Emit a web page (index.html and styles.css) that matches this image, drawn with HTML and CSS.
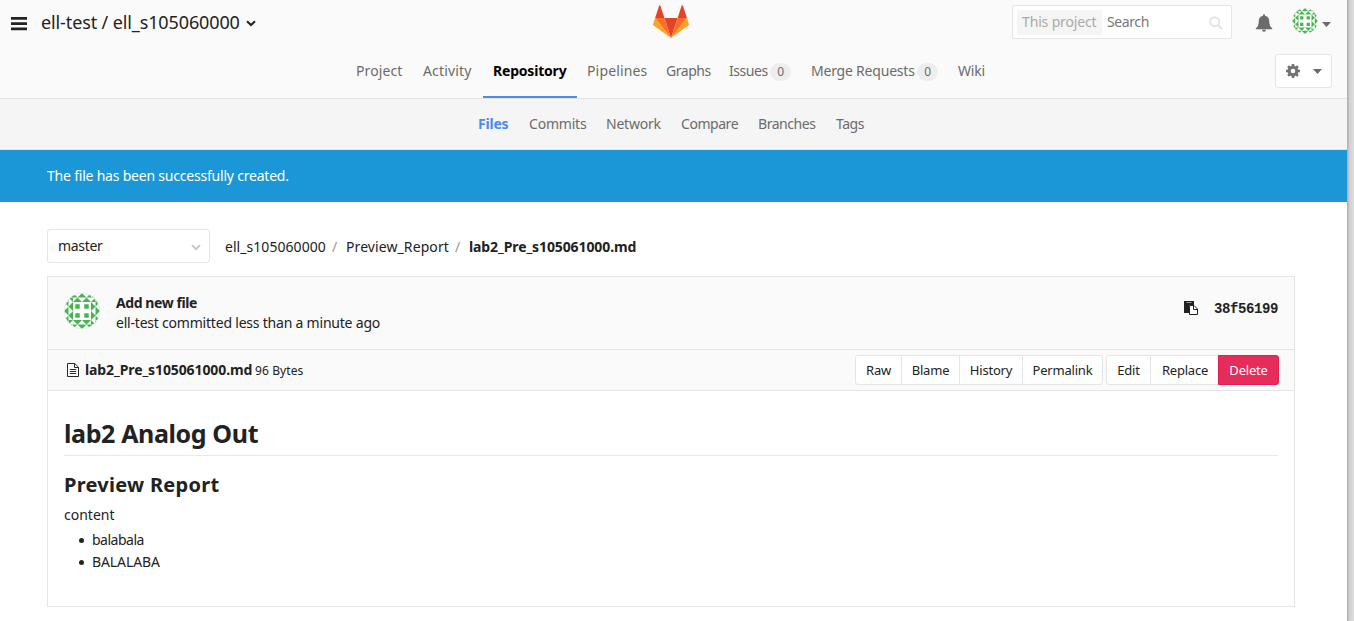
FILE: index.html
```html
<!DOCTYPE html>
<html lang="en">
<head>
<meta charset="utf-8">
<title>lab2_Pre_s105061000.md</title>
<link rel="stylesheet" href="styles.css">
</head>
<body>
<svg class="defs" width="0" height="0">
  <defs>
    <g id="side">
      <path d="M13.500 4.500L18 0L22.500 4.500zM9 0L13.500 4.500H9zM27 0L22.500 4.500H27zM9 9L13.500 4.500L18 9zM18 9L22.500 4.500L27 9z"/>
      <path d="M4.500 4.500H9V9zM0 4.500H4.500V9zM4.500 0H9V4.500z"/>
      <path d="M11.250 11.250h4.500v4.500h-4.500z"/>
    </g>
    <symbol id="identicon" viewBox="0 0 36 36">
      <clipPath id="round"><circle cx="18" cy="18" r="17.5"/></clipPath>
      <circle cx="18" cy="18" r="17.7" fill="#fff" stroke="#dedede" stroke-width=".6"/>
      <g clip-path="url(#round)" fill="#46b450">
        <use href="#side"/>
        <use href="#side" transform="rotate(90 18 18)"/>
        <use href="#side" transform="rotate(180 18 18)"/>
        <use href="#side" transform="rotate(270 18 18)"/>
      </g>
    </symbol>
  </defs>
</svg>
<div class="page">
  <header class="header">
    <div class="topbar">
      <div class="title-side">
        <svg class="burger" viewBox="0 0 16 14"><path d="M0 0h16v2.700H0zM0 5.300h16v2.700H0zM0 10.600h16v2.700H0z" fill="#222"/></svg>
        <h1 class="title">ell-test / ell_s105060000</h1>
        <svg class="title-caret" viewBox="0 0 10 7"><path d="M1 1.200L5 5L9 1.200" fill="none" stroke="#222" stroke-width="2"/></svg>
      </div>
      <svg class="logo" viewBox="0 0 36 33">
        <path d="M18 33L24.600 13H11.400z" fill="#e24329"/>
        <path d="M18 33L11.400 13H2.100z" fill="#fc6d26"/>
        <path d="M2.100 13L.1 19a1.400 1.400 0 0 0 .5 1.500L18 33z" fill="#fca326"/>
        <path d="M2.100 13h9.300L7.400.7a.7.7 0 0 0-1.300 0z" fill="#e24329"/>
        <path d="M18 33L24.600 13h9.300z" fill="#fc6d26"/>
        <path d="M33.900 13l2 6a1.400 1.400 0 0 1-.5 1.500L18 33z" fill="#fca326"/>
        <path d="M33.900 13h-9.300L28.600.7a.7.7 0 0 1 1.300 0z" fill="#e24329"/>
      </svg>
      <div class="tools">
        <div class="search">
          <span class="scope">This project</span>
          <span class="search-text">Search</span>
          <svg class="search-icon" viewBox="0 0 14 14"><circle cx="5.700" cy="5.700" r="4.500" fill="none" stroke="#e2e4e8" stroke-width="2"/><path d="M9 9l4 4" stroke="#e2e4e8" stroke-width="2.200"/></svg>
        </div>
        <svg class="bell" viewBox="0 0 18 18"><path d="M8 1.200a1 1 0 0 1 2 0v.6c3 .5 4.300 2.900 4.300 5.600 0 3.600 1 5.400 2.900 6.800v1.100H.8v-1.100c1.900-1.400 2.900-3.200 2.900-6.800C3.700 4.700 5 2.300 8 1.800zM7 15.700h4a2 2 0 0 1-4 0z" fill="#6b6b6b"/></svg>
        <svg class="avatar-small"><use href="#identicon"/></svg>
        <svg class="caret" viewBox="0 0 9 5"><path d="M0 0h9L4.500 5z" fill="#6b6b6b"/></svg>
      </div>
    </div>
    <div class="navrow">
      <nav class="nav">
        <a class="w47">Project</a>
        <a class="w50 loose">Activity</a>
        <a class="w74 active">Repository</a>
        <a class="w59 loose">Pipelines</a>
        <a class="w43 tight">Graphs</a>
        <a class="w62 tight">Issues <span class="badge">0</span></a>
        <a class="w127">Merge Requests <span class="badge">0</span></a>
        <a class="w28">Wiki</a>
      </nav>
      <div class="settings">
        <svg class="gear" viewBox="0 0 14 14"><g fill="#737373"><path fill-rule="evenodd" d="M7 1.700a5.300 5.300 0 1 0 0 10.600A5.300 5.300 0 0 0 7 1.700zM7 4.700a2.300 2.300 0 1 1 0 4.600a2.300 2.300 0 0 1 0-4.600z"/><path id="t" d="M5.500 2.500L5.800 0h2.400l.3 2.500zM5.500 11.500L5.800 14h2.400l.3-2.500z"/><use href="#t" transform="rotate(45 7 7)"/><use href="#t" transform="rotate(90 7 7)"/><use href="#t" transform="rotate(135 7 7)"/></g></svg>
        <svg class="caret" viewBox="0 0 9 5"><path d="M0 0h9L4.500 5z" fill="#6b6b6b"/></svg>
      </div>
    </div>
  </header>
  <nav class="subnav">
    <a class="w31 current">Files</a>
    <a class="w57">Commits</a>
    <a class="w55">Network</a>
    <a class="w57 tight">Compare</a>
    <a class="w58 tight">Branches</a>
    <a class="w28 tight">Tags</a>
  </nav>
  <div class="flash">The file has been successfully created.</div>
  <main class="content">
    <div class="ref-row">
      <div class="branch"><span>master</span><svg viewBox="0 0 10 7"><path d="M1 1.200L5 5.200L9 1.200" fill="none" stroke="#c4c4c4" stroke-width="1.900"/></svg></div>
      <div class="crumbs">
        <span class="c1">ell_s105060000</span><span class="slash">/</span><span class="c2">Preview_Report</span><span class="slash">/</span><strong class="c3">lab2_Pre_s105061000.md</strong>
      </div>
    </div>
    <section class="box">
      <div class="commit">
        <svg class="avatar"><use href="#identicon"/></svg>
        <div class="message"><strong>Add new file</strong><span>ell-test committed less than a minute ago</span></div>
        <svg class="copy" viewBox="0 0 14 14"><path d="M0 0h10v4H5v8H0z" fill="#222"/><path d="M2.500 1.500h5" stroke="#999"/><path d="M5.500 4.500h4.500l3.500 3.500v5.500h-8z" fill="#fff" stroke="#222"/><path d="M9.500 4.500v4h4" fill="none" stroke="#222"/></svg>
        <code class="sha">38f56199</code>
      </div>
      <div class="file-title">
        <svg class="doc" viewBox="0 0 12 14"><path d="M.5.5h7.300l3.700 3.700v9.300H.5zM7.500.5v4h4M2.800 6.500h6.400M2.800 8.500h6.400M2.800 10.500h6.400" fill="none" stroke="#292929"/></svg>
        <strong class="name">lab2_Pre_s105061000.md</strong>
        <span class="size">96 Bytes</span>
        <div class="group first"><a class="b47">Raw</a><a class="b59">Blame</a><a class="b64">History</a><a class="b81">Permalink</a></div>
        <div class="group"><a class="b45">Edit</a><a class="b69">Replace</a><a class="b61 delete">Delete</a></div>
      </div>
      <article class="doc-body">
        <h2>lab2 Analog Out</h2>
        <h3>Preview Report</h3>
        <p>content</p>
        <ul><li class="lower">balabala</li><li class="upper">BALALABA</li></ul>
      </article>
    </section>
  </main>
</div>
</body>
</html>
```
FILE: styles.css
```css
* { box-sizing: border-box; }
body {
  margin: 0;
  height: 621px;
  overflow: hidden;
  background: linear-gradient(90deg, #b2b2b2 0 1348px, #cecece 1349px, #dfdfdf 1354px);
  font: 14px/20px "Noto Sans", sans-serif;
  letter-spacing: -.21px;
  color: #222;
  white-space: nowrap;
}
.defs { position: absolute; }
svg { display: block; flex: none; }
h1, h2, h3, p, ul { margin: 0; padding: 0; }
.page { width: 1347px; height: 621px; background: #fff; }
.header { height: 99px; background: #fafafa; border-bottom: 1px solid #e4e4e4; }
.topbar { height: 48px; display: grid; grid-template-columns: 653px 36px 1fr; }
.title-side { display: flex; padding-left: 11px; }
.burger { width: 16px; height: 14px; margin-top: 17px; }
.title { width: 199px; margin: 10px 6px 0 14px; font-size: 18px; line-height: 24px; font-weight: 400; letter-spacing: -.12px; }
.title-caret { width: 10px; height: 7px; margin-top: 20px; }
.logo { width: 36px; height: 33px; margin-top: 5px; }
.tools { display: flex; padding-left: 323px; }
.search { width: 220px; height: 34px; margin-top: 5px; padding: 4px; display: flex; background: #fff; border: 1px solid #e5e5e5; border-radius: 2px; }
.scope { width: 85px; height: 25px; padding-left: 5px; line-height: 24px; color: #aaa; background: #f5f5f5; border-radius: 2px; letter-spacing: -.15px; }
.search-text { width: 42px; margin-left: 5px; line-height: 24px; color: #777; letter-spacing: -.4px; }
.search-icon { width: 14px; height: 14px; margin: 6px 0 0 60px; }
.bell { width: 18px; height: 18px; margin: 14px 0 0 23px; }
.avatar-small { width: 26px; height: 26px; margin: 8px 0 0 19px; }
.caret { width: 9px; height: 5px; }
.tools .caret { margin: 22px 0 0 4px; }
.navrow { height: 50px; display: flex; }
.nav { width: 1275px; padding-left: 346px; display: flex; }
.nav a { box-sizing: content-box; height: 48px; padding: 0 10px; line-height: 46px; color: #6b6b6b; }
.nav .active { color: #000; font-weight: 700; border-bottom: 2px solid #4a8bee; letter-spacing: -.2px; }
.nav .w47 { letter-spacing: .1px; }
.nav .loose { letter-spacing: .15px; }
.tight { letter-spacing: -.45px; }
.badge { display: inline-block; width: 21px; height: 18px; margin-left: -1px; line-height: 18px; border-radius: 9px; text-align: center; font-size: 12px; background: #ededed; }
.settings { width: 57px; height: 34px; margin-top: 6px; display: flex; align-items: center; padding-left: 10px; gap: 13px; background: #fff; border: 1px solid #e5e5e5; border-radius: 3px; }
.gear { width: 14px; height: 14px; margin-top: -1px; }
.w28 { width: 28px; }
.w31 { width: 31px; }
.w43 { width: 43px; }
.w47 { width: 47px; }
.w50 { width: 50px; }
.w55 { width: 55px; }
.w57 { width: 57px; }
.w58 { width: 58px; }
.w59 { width: 59px; }
.w62 { width: 62px; }
.w74 { width: 74px; }
.w127 { width: 127px; }
.subnav { height: 51px; display: flex; gap: 20px; padding-left: 478px; line-height: 50px; color: #6b6b6b; background: #f5f5f5; border-bottom: 1px solid #e4e4e4; }
.current { color: #4a8bee; font-weight: 700; }
.flash { height: 52px; padding-left: 47px; line-height: 52px; color: #fff; background: #1b97d7; }
.content { width: 1295px; padding: 27px 0 0 47px; }
.ref-row { height: 47px; display: flex; }
.branch { width: 163px; height: 34px; padding: 0 8px 0 10px; display: flex; align-items: center; justify-content: space-between; border: 1px solid #e5e5e5; border-radius: 3px; letter-spacing: -.3px; }
.branch svg { width: 10px; height: 7px; margin-top: 2px; }
.crumbs { display: flex; padding-left: 15px; line-height: 36px; }
.c1 { width: 101px; letter-spacing: .05px; }
.slash { width: 20px; padding-left: 6px; color: #999; }
.c2 { width: 103px; letter-spacing: .09px; }
.c3, .name { letter-spacing: -.1px; }
.box { height: 331px; border: 1px solid #e5e5e5; }
.commit { height: 72px; display: flex; padding: 16px 16px 0; background: #fafafa; }
.avatar { width: 36px; height: 36px; }
.message { display: flex; flex-direction: column; flex: 1; padding-left: 16px; }
.message strong { letter-spacing: -.42px; }
.copy { width: 14px; height: 14px; margin: 8px 16px 0 0; }
.sha { width: 64px; margin-top: 6px; font: 700 14px/20px "Liberation Mono", monospace; letter-spacing: -.4px; }
.file-title { height: 42px; display: flex; padding: 5px 15px 0 19px; background: #fafafa; border-top: 1px solid #e5e5e5; border-bottom: 1px solid #e5e5e5; }
.doc { width: 12px; height: 14px; margin: 8px 6px 0 0; }
.name { width: 167px; line-height: 30px; }
.size { width: 49px; margin-left: 3px; line-height: 31px; font-size: 12px; letter-spacing: .1px; }
.group { height: 30px; margin-left: 3px; display: flex; border: 1px solid #e5e5e5; border-radius: 3px; font-size: 13px; line-height: 28px; text-align: center; background: #fff; }
.first { margin-left: auto; }
.group a + a { border-left: 1px solid #e5e5e5; }
.b45 { width: 43px; }
.b47 { width: 45px; }
.b59 { width: 58px; }
.b61 { width: 61px; }
.b64 { width: 63px; }
.b69 { width: 69px; }
.b81 { width: 80px; }
.group .delete { margin: -1px; height: 30px; border: 1px solid #e01f52; color: #fff; background: #e52c5a; border-radius: 0 3px 3px 0; }
.doc-body { padding: 24px 16px 0; }
.doc-body h2 { height: 41px; font-size: 25px; line-height: 36px; border-bottom: 1px solid #e9e9e9; letter-spacing: -.38px; }
.doc-body h3 { margin-top: 16px; font-size: 20px; line-height: 25px; letter-spacing: .27px; }
.doc-body p { margin-top: 7px; line-height: 22px; letter-spacing: 0; }
.doc-body ul { margin-top: 3px; padding-left: 15px; line-height: 22px; list-style: none; }
.doc-body li { display: flex; align-items: center; gap: 8px; }
.doc-body li::before { content: ""; width: 5px; height: 5px; margin-top: 1px; border-radius: 3px; background: #222; }
.lower { letter-spacing: -.5px; }
.upper { letter-spacing: -.1px; }
```
